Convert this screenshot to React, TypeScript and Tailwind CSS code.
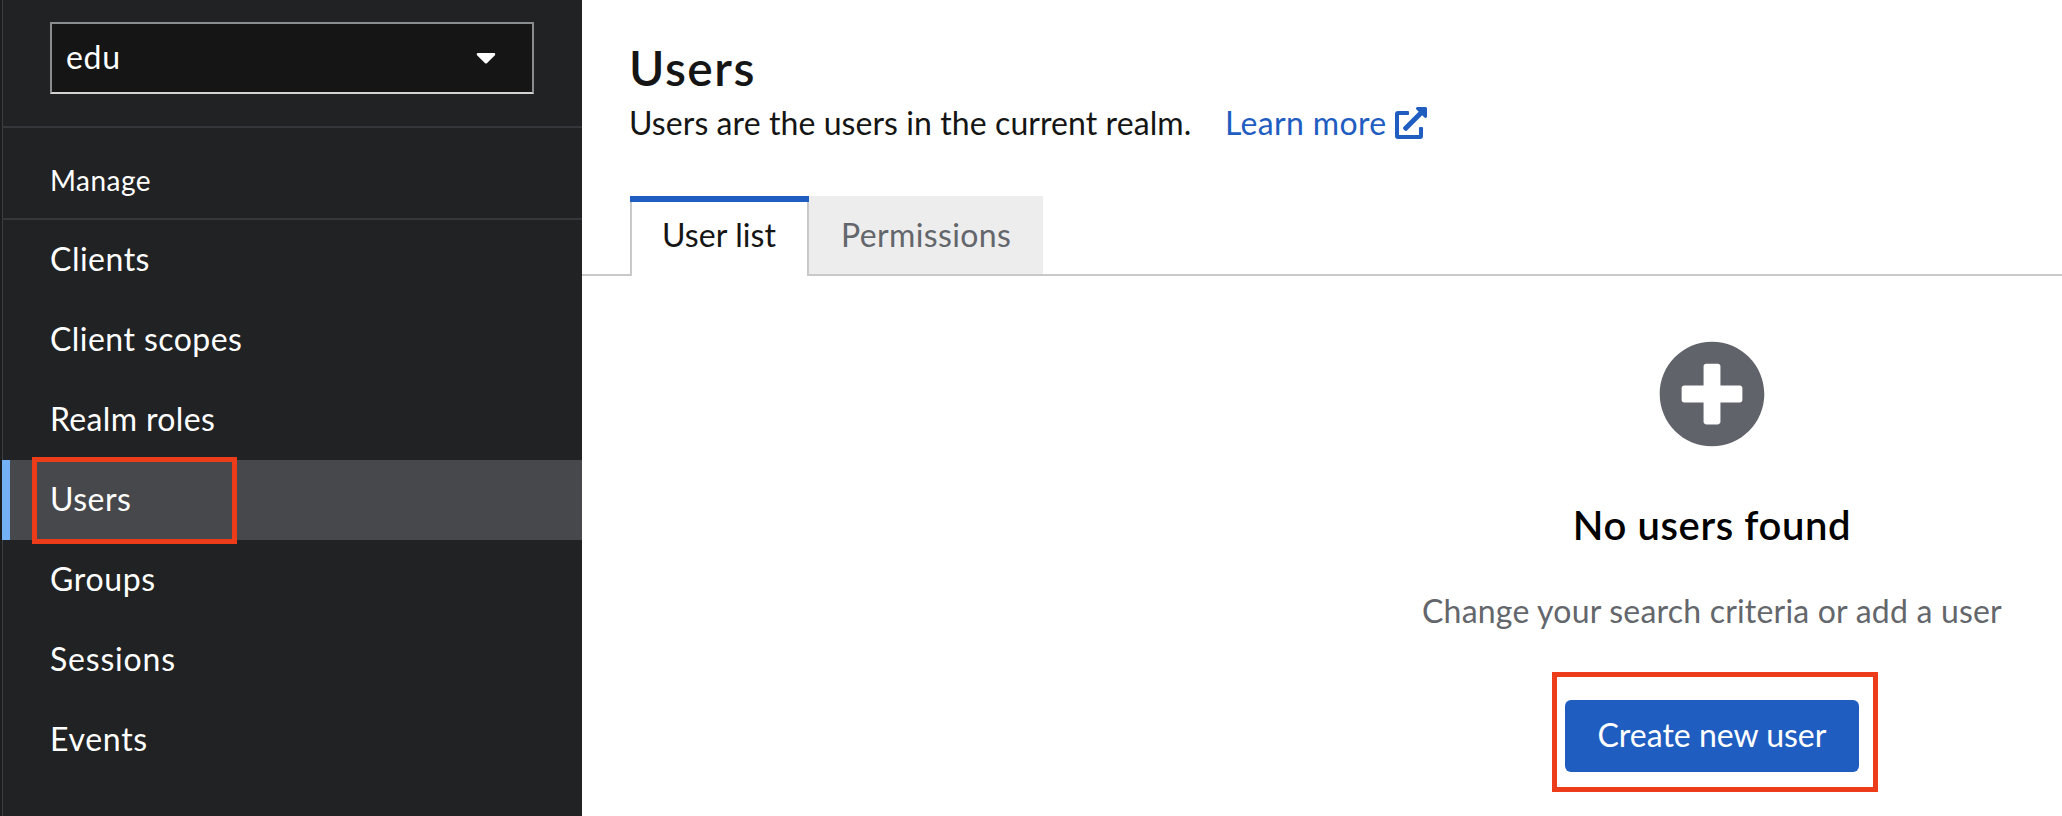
import React from "react";
import { FaCaretDown, FaExternalLinkAlt, FaPlusCircle } from "react-icons/fa";

type NavItem = { label: string; tracking: string; active?: boolean };

const navItems: NavItem[] = [
  { label: "Clients", tracking: "tracking-[0.5px]" },
  { label: "Client scopes", tracking: "tracking-[0.45px]" },
  { label: "Realm roles", tracking: "tracking-[0.35px]" },
  { label: "Users", tracking: "tracking-[0.5px]", active: true },
  { label: "Groups", tracking: "tracking-[0.65px]" },
  { label: "Sessions", tracking: "tracking-[0.8px]" },
  { label: "Events", tracking: "tracking-[0.7px]" },
];

function Sidebar() {
  return (
    <aside className="flex w-[582px] shrink-0 border-l-2 border-[#1b1d1f] bg-[#212224] text-white">
      <div className="flex w-full flex-col shadow-[inset_1px_0_0_#3c3f42]">
        <div className="h-32 border-b-2 border-[#36373a] px-12 pt-[22px]">
          <button className="flex h-[72px] w-[484px] items-center justify-between border-2 border-[#8a8d90] border-b-[#d2d2d2] bg-[#151515] pr-9 pb-0.5 pl-[14px]">
            <span className="tracking-[0.7px]">edu</span>
            <FaCaretDown className="h-8 w-5" />
          </button>
        </div>
        <h2 className="h-[92px] border-b-2 border-[#36373a] pt-[31px] pl-12 text-[28px] leading-[42px] tracking-[0.5px]">
          Manage
        </h2>
        <nav>
          <ul>
            {navItems.map((item) => (
              <li key={item.label}>
                <a
                  className={
                    item.active
                      ? "relative flex h-20 items-start border-l-8 border-[#73b1f5] bg-[#47484b] pt-[15px] pl-10"
                      : "flex h-20 items-start pt-[15px] pl-12"
                  }
                >
                  <span className={item.tracking}>{item.label}</span>
                  {item.active && (
                    <span className="absolute top-[-3px] left-[22px] h-[87px] w-[205px] border-[5px] border-[#ec3c1a]" />
                  )}
                </a>
              </li>
            ))}
          </ul>
        </nav>
      </div>
    </aside>
  );
}

function PageHeader() {
  return (
    <header className="pt-[37px] pl-[47px]">
      <h1 className="h-[62px] text-[48px] leading-[62px] font-semibold tracking-[1.5px] text-[#151515]">
        Users
      </h1>
      <div className="flex h-12 items-center text-[#151515]">
        <p className="w-[596px] tracking-[0.08px]">Users are the users in the current realm.</p>
        <a className="flex items-center text-[#1f5dc1]">
          <span className="w-[170px] tracking-[0.35px]">Learn more</span>
          <FaExternalLinkAlt className="size-8" />
        </a>
      </div>
    </header>
  );
}

function Tabs() {
  return (
    <div className="mt-[49px] flex h-20 items-stretch">
      <div className="w-12 border-b-2 border-[#c9c9c9]" />
      <button className="flex w-[179px] flex-col items-start border-x-2 border-[#c9c9c9] text-[#151515]">
        <span className="-mx-0.5 h-1.5 self-stretch bg-[#1f5dc1]" />
        <span className="pt-[9px] pl-[30px] tracking-[0.1px]">User list</span>
      </button>
      <button className="flex w-[234px] items-start border-b-2 border-[#c9c9c9] bg-[#ededed] pt-[15px] pl-8 tracking-[0.38px] text-[#63666b]">
        Permissions
      </button>
      <div className="grow border-b-2 border-[#c9c9c9]" />
    </div>
  );
}

function EmptyState() {
  return (
    <section className="flex flex-col items-center pt-16">
      <FaPlusCircle className="size-[108px] text-[#606369]" />
      <h2 className="mt-[51px] text-[40px] leading-[52px] font-semibold tracking-[0.6px] text-black">
        No users found
      </h2>
      <p className="mt-9 tracking-[0.2px] text-[#63666b]">
        Change your search criteria or add a user
      </p>
      <div className="relative mt-[65px]">
        <button className="flex h-[72px] w-[294px] items-start justify-center rounded-md bg-[#1f5dc1] pt-[11px] text-white">
          Create new user
        </button>
        <span className="absolute -top-7 -left-[13px] h-[120px] w-[326px] border-[5px] border-[#ec3c1a]" />
      </div>
    </section>
  );
}

export default function App() {
  return (
    <div className="flex h-[816px] w-full overflow-hidden bg-white font-[Lato,sans-serif] text-[32px] leading-[48px]">
      <Sidebar />
      <main className="w-[2260px] shrink-0">
        <PageHeader />
        <Tabs />
        <EmptyState />
      </main>
    </div>
  );
}
